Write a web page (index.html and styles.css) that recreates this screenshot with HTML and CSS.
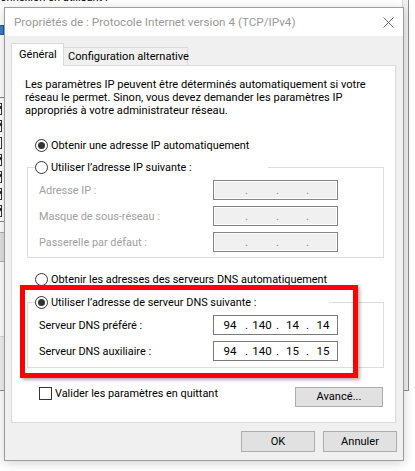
FILE: index.html
```html
<!DOCTYPE html>
<html lang="fr">
<head>
<meta charset="utf-8">
<title>Propriétés de : Protocole Internet version 4 (TCP/IPv4)</title>
<link rel="stylesheet" href="styles.css">
</head>
<body>
<div class="bgwin">
  <div class="bgpanel">
    <div class="bg-caption">Connexion en utilisant :</div>
    <div class="bg-icon"></div>
    <div class="bg-list">
      <div class="bg-item"><span class="bg-check on"></span></div>
      <div class="bg-item"><span class="bg-check on"></span></div>
      <div class="bg-item"><span class="bg-check"></span></div>
      <div class="bg-item"><span class="bg-check on"></span></div>
      <div class="bg-item"><span class="bg-check on"></span></div>
      <div class="bg-item"><span class="bg-check on"></span></div>
      <div class="bg-item"><span class="bg-check on"></span></div>
    </div>
    <div class="bg-btn"></div>
  </div>
</div>

<div class="dialog">
  <div class="titlebar">
    <span class="title">Propriétés de : Protocole Internet version 4 (TCP/IPv4)</span>
    <svg class="close" width="11" height="11" viewBox="0 0 11 11"><path d="M0.5 0.5L10.5 10.5M10.5 0.5L0.5 10.5" stroke="#6a6a6a" stroke-width="1" fill="none"/></svg>
  </div>
  <div class="body">
    <div class="tabs">
      <div class="tab active">Général</div>
      <div class="tab">Configuration alternative</div>
    </div>
    <div class="panel">
      <p class="intro">Les paramètres IP peuvent être déterminés automatiquement si votre<br>réseau le permet. Sinon, vous devez demander les paramètres IP<br>appropriés à votre administrateur réseau.</p>

      <div class="radio top-radio"><span class="dot checked"></span>Obtenir une adresse IP automatiquement</div>

      <fieldset class="group g-ip">
        <legend class="leg leg-ip"><span class="radio"><span class="dot"></span>Utiliser l’adresse IP suivante :</span></legend>
        <div class="field"><span class="lbl off">Adresse IP :</span><span class="ipbox off"><span class="seg"></span><span class="sep">.</span><span class="seg"></span><span class="sep">.</span><span class="seg"></span><span class="sep">.</span><span class="seg"></span></span></div>
        <div class="field"><span class="lbl off">Masque de sous-réseau :</span><span class="ipbox off"><span class="seg"></span><span class="sep">.</span><span class="seg"></span><span class="sep">.</span><span class="seg"></span><span class="sep">.</span><span class="seg"></span></span></div>
        <div class="field"><span class="lbl off">Passerelle par défaut :</span><span class="ipbox off"><span class="seg"></span><span class="sep">.</span><span class="seg"></span><span class="sep">.</span><span class="seg"></span><span class="sep">.</span><span class="seg"></span></span></div>
      </fieldset>

      <div class="radio dns-auto"><span class="dot"></span>Obtenir les adresses des serveurs DNS automatiquement</div>

      <fieldset class="group g-dns">
        <legend class="leg leg-dns"><span class="radio"><span class="dot checked"></span>Utiliser l’adresse de serveur DNS suivante :</span></legend>
        <div class="field"><span class="lbl">Serveur DNS préféré :</span><span class="ipbox"><span class="seg">94</span><span class="sep">.</span><span class="seg">140</span><span class="sep">.</span><span class="seg">14</span><span class="sep">.</span><span class="seg">14</span></span></div>
        <div class="field"><span class="lbl">Serveur DNS auxiliaire :</span><span class="ipbox"><span class="seg">94</span><span class="sep">.</span><span class="seg">140</span><span class="sep">.</span><span class="seg">15</span><span class="sep">.</span><span class="seg">15</span></span></div>
      </fieldset>

      <div class="bottom-row">
        <span class="check"></span><span class="check-label">Valider les paramètres en quittant</span>
        <button class="btn adv">Avancé...</button>
      </div>
    </div>
    <div class="footer">
      <button class="btn">OK</button>
      <button class="btn">Annuler</button>
    </div>
  </div>
  <div class="highlight"></div>
</div>
</body>
</html>
```

FILE: styles.css
```css
* { box-sizing: border-box; }
html, body { margin: 0; padding: 0; }
body {
  width: 415px;
  height: 471px;
  overflow: hidden;
  position: relative;
  background: #ffffff;
  font-family: Roboto, "Noto Sans", sans-serif;
  font-size: 10.9px;
  color: #000;
}

/* background window (desktop) */
.bgwin {
  position: absolute;
  left: -250px;
  top: -80px;
  width: 659px;
  height: 471px;
  background: #f0f0f0;
  border: 1px solid #8c8c8c;
}
.bgpanel {
  margin: 60px 5px 0 7px;
  height: 356px;
  background: #fff;
  border: 1px solid #d9d9d9;
  padding-top: 8px;
}
.bg-caption { padding-left: 234px; line-height: 15px; white-space: nowrap; font-size: 11.1px; }
.bg-icon {
  margin: 20px 0 0 233px;
  width: 12px;
  height: 10px;
  background: #3c7fc4;
  border: 1px solid #245a94;
}
.bg-list {
  margin: 62px 0 0 200px;
  width: 120px;
  border: 1px solid #828790;
  padding: 2px 0;
}
.bg-item { height: 17px; display: flex; align-items: center; padding-left: 30px; }
.bg-check {
  width: 12px; height: 12px;
  border: 1px solid #333;
  background: #fff;
  position: relative;
}
.bg-check.on::after {
  content: "";
  position: absolute;
  left: 3px; top: 0px;
  width: 4px; height: 7px;
  border-right: 2px solid #222;
  border-bottom: 2px solid #222;
  transform: rotate(40deg);
}
.bg-btn {
  margin: 10px 0 0 200px;
  width: 120px;
  height: 30px;
  background: #e1e1e1;
  border: 1px solid #adadad;
}

/* dialog */
.dialog {
  position: absolute;
  left: 4px;
  top: 7px;
  width: 400px;
  height: 454px;
  border: 1px solid #9c9c9c;
  background: #f0f0f0;
  box-shadow: 0 2px 10px rgba(0, 0, 0, 0.18);
  display: flex;
  flex-direction: column;
}
.titlebar {
  height: 28px;
  background: #fff;
  display: flex;
  align-items: center;
  padding: 0 9px 0 9px;
}
.title { color: #999999; white-space: nowrap; font-size: 11.7px; }
.close { margin-left: auto; display: block; }

.body {
  flex: 1;
  padding: 7px 7px 0 6px;
  display: flex;
  flex-direction: column;
}
.tabs {
  display: flex;
  align-items: flex-end;
  height: 22px;
  position: relative;
  z-index: 1;
}
.tab {
  height: 18px;
  width: 124px;
  padding: 1px 0 0 4px;
  line-height: 15px;
  background: #f0f0f0;
  border: 1px solid #d9d9d9;
  border-bottom: none;
  border-left: none;
  white-space: nowrap;
  font-size: 11.1px;
}
.tab.active {
  width: 53px;
  height: 23px;
  margin-bottom: -1px;
  padding: 3px 0 0 7px;
  background: #fff;
  border-left: 1px solid #d9d9d9;
}
.panel {
  height: 358px;
  background: #fff;
  border: 1px solid #d9d9d9;
  padding: 12px 11px 0 13px;
}
.intro {
  margin: 0;
  line-height: 13px;
  white-space: nowrap;
  font-size: 11.1px;
}

.radio {
  display: flex;
  align-items: center;
  height: 18px;
  white-space: nowrap;
}
.dot {
  width: 13px;
  height: 13px;
  border: 1px solid #333;
  border-radius: 50%;
  background: #fff;
  margin-right: 3px;
  flex: none;
  position: relative;
}
.dot.checked::after {
  content: "";
  position: absolute;
  left: 2px; top: 2px;
  width: 7px; height: 7px;
  border-radius: 50%;
  background: #333;
}
.top-radio { margin: 19px 0 0 10px; }
.dns-auto { margin: 12px 0 0 10px; }

.group {
  margin: 4px 0 0 2px;
  padding: 4px 0 5px 11px;
  border: 1px solid #dcdcdc;
  min-width: 0;
}
.g-dns { margin-top: 5px; padding-bottom: 6px; }
.leg {
  padding: 0;
  margin-left: -4px;
  background: #fff;
}
.leg-ip { width: 233px; }
.leg-dns { width: 294px; }

.field {
  display: grid;
  grid-template-columns: 174px 125px;
  align-items: center;
  height: 20px;
}
.field + .field { margin-top: 6px; }
.lbl { white-space: nowrap; }
.lbl.off { color: #a0a0a0; }

.ipbox {
  display: flex;
  height: 20px;
  border: 1px solid #7a7a7a;
  background: #fff;
  padding-left: 1px;
  line-height: 18px;
  font-size: 11.5px;
}
.ipbox.off {
  background: #f0f0f0;
  border-color: #838383;
  box-shadow: inset 0 0 0 1px #fff;
  color: #7c7c9c;
}
.seg { text-align: center; width: 28px; }
.seg:first-child { width: 30px; }
.seg:nth-child(5) { width: 27px; }
.sep { width: 3px; text-align: center; }

.bottom-row {
  margin: 19px 0 0 14px;
  display: flex;
  align-items: flex-start;
}
.check {
  width: 13px;
  height: 13px;
  border: 1px solid #333;
  background: #fff;
  flex: none;
}
.check-label { margin-left: 3px; line-height: 13px; white-space: nowrap; }

.btn {
  font: inherit;
  font-size: 11.1px;
  color: #000;
  background: #e1e1e1;
  border: 1px solid #adadad;
  border-radius: 0;
  padding: 0;
  height: 21px;
  width: 74px;
  line-height: 18px;
}
.adv { margin-left: auto; width: 88px; height: 20px; margin-right: 1px; }

.footer {
  margin: 8px -1px 0 0;
  display: flex;
  justify-content: flex-end;
  gap: 8px;
}

/* annotation overlay */
.highlight {
  position: absolute;
  left: 15px;
  top: 277px;
  width: 338px;
  height: 93px;
  border: 5px solid #ff0000;
  box-shadow: 2px 2px 3px rgba(0, 0, 0, 0.3);
  pointer-events: none;
}
```
